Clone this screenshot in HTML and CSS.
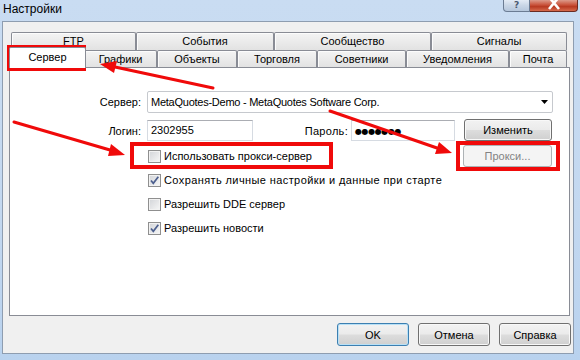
FILE: index.html
```html
<!DOCTYPE html>
<html lang="ru">
<head>
<meta charset="utf-8">
<title>Настройки</title>
<link rel="stylesheet" href="styles.css">
</head>
<body>
<div class="titlebar">
  <span class="title">Настройки</span>
  <div class="caption">
    <div class="cap-help"><span class="q">?</span></div>
    <div class="cap-close">
      <svg width="14" height="10" viewBox="0 0 14 10"><path d="M2 -3 L12 9 M12 -3 L2 9" stroke="#fff" stroke-width="2.6" fill="none"/></svg>
    </div>
  </div>
</div>
<div class="client">
  <div class="tabs">
    <div class="tabrow row-top">
      <div class="tab w-ftp">FTP</div>
      <div class="tab w-events">События</div>
      <div class="tab w-comm">Сообщество</div>
      <div class="tab w-sig">Сигналы</div>
    </div>
    <div class="tabrow row-bottom">
      <div class="tab tab-selected">Сервер</div>
      <div class="tab w-charts">Графики</div>
      <div class="tab w-obj">Объекты</div>
      <div class="tab w-trade">Торговля</div>
      <div class="tab w-adv">Советники</div>
      <div class="tab w-notif">Уведомления</div>
      <div class="tab w-mail">Почта</div>
    </div>
  </div>
  <div class="panel">
    <div class="f-row row-server">
      <label class="lbl">Сервер:</label>
      <div class="combo">
        <span class="combo-text">MetaQuotes-Demo - MetaQuotes Software Corp.</span>
        <svg class="combo-arrow" width="7" height="4" viewBox="0 0 7 4"><path d="M0 0 H7 L3.5 4 Z" fill="#000"/></svg>
      </div>
    </div>
    <div class="f-row row-login">
      <label class="lbl">Логин:</label>
      <div class="edit edit-login">2302955</div>
      <label class="lbl2">Пароль:</label>
      <div class="edit edit-pass"><span class="dots">●●●●●●●</span></div>
      <button class="btn btn-change">Изменить</button>
    </div>
    <div class="checks">
      <div class="chk-row">
        <span class="chk"></span><span class="chk-label">Использовать прокси-сервер</span>
        <button class="btn btn-disabled btn-proxy">Прокси...</button>
      </div>
      <div class="chk-row">
        <span class="chk checked"><svg width="11" height="11" viewBox="0 0 11 11"><path d="M2 5.5 L4.3 8.3 L9.3 1.8" stroke="#4c5f8e" stroke-width="1.7" fill="none"/></svg></span><span class="chk-label chk-label-wide">Сохранять личные настройки и данные при старте</span>
      </div>
      <div class="chk-row">
        <span class="chk"></span><span class="chk-label">Разрешить DDE сервер</span>
      </div>
      <div class="chk-row">
        <span class="chk checked"><svg width="11" height="11" viewBox="0 0 11 11"><path d="M2 5.5 L4.3 8.3 L9.3 1.8" stroke="#4c5f8e" stroke-width="1.7" fill="none"/></svg></span><span class="chk-label">Разрешить новости</span>
      </div>
    </div>
  </div>
  <div class="dlg-btns">
    <button class="btn btn-default">OK</button>
    <button class="btn">Отмена</button>
    <button class="btn">Справка</button>
  </div>
</div>
<svg class="annot" width="580" height="360" viewBox="0 0 580 360">
  <g fill="none" stroke="#f00a0a" stroke-width="4">
    <rect x="9" y="47" width="75" height="22"/>
    <rect x="132" y="144" width="199" height="23"/>
    <rect x="458" y="143" width="100" height="26"/>
  </g>
  <g stroke="#f00a0a" stroke-width="3" stroke-linecap="round">
    <line x1="213" y1="88" x2="115" y2="67"/>
    <line x1="14" y1="122" x2="110" y2="150"/>
    <line x1="330" y1="111" x2="437" y2="148"/>
  </g>
  <g fill="#f00a0a">
    <polygon points="100,64 117,61 114,73"/>
    <polygon points="125,155 108,156 111,144"/>
    <polygon points="452,153 435,154 439,142"/>
  </g>
</svg>
</body>
</html>
```
FILE: styles.css
```css
* { box-sizing: border-box; }

html, body { margin: 0; padding: 0; }

body {
  width: 580px;
  height: 360px;
  overflow: hidden;
  position: relative;
  background: linear-gradient(#c9dcf2, #c3d8f0 60%, #b9d2ee);
  font-family: "Liberation Sans", Arial, sans-serif;
  font-size: 11px;
  color: #000;
}

.titlebar {
  height: 21px;
  display: flex;
  align-items: flex-start;
  padding: 0 2px 0 3px;
}

.title {
  font-size: 12px;
  line-height: 17px;
  margin-top: 1px;
  color: #000;
}

.caption {
  margin-left: auto;
  display: flex;
}

.cap-help {
  width: 27px;
  height: 12px;
  border: 1px solid #6b7c93;
  border-top: none;
  border-radius: 0 0 0 4px;
  background: linear-gradient(#e3ebf5, #c9d6e6 50%, #b6c7dc);
  display: flex;
  justify-content: center;
  align-items: flex-start;
  overflow: hidden;
}

.cap-help .q {
  font-family: "DejaVu Sans", sans-serif;
  font-weight: bold;
  font-size: 9px;
  line-height: 11px;
  color: #4b5a70;
}

.cap-close {
  width: 48px;
  height: 12px;
  border: 1px solid #6a2b22;
  border-top: none;
  border-left: none;
  border-radius: 0 0 4px 0;
  background: linear-gradient(#dc9a8a, #c9523a 45%, #b83a22 60%, #d66a4c);
  display: flex;
  justify-content: center;
  overflow: hidden;
}

.client {
  margin-left: 2px;
  width: 572px;
  height: 333px;
  border: 1px solid #8e9db0;
  background: #f0f0f0;
  padding: 10px 0 0 6px;
}

.tabs {
  margin-left: 2px;
  width: 556px;
}

.tabrow {
  display: flex;
}

.row-top { height: 18px; }
.row-bottom { height: 17px; }

.tab {
  border: 1px solid #898c95;
  border-bottom: none;
  border-radius: 2px 2px 0 0;
  background: linear-gradient(#f4f4f4, #ebebeb 50%, #e2e2e2);
  text-align: center;
  white-space: nowrap;
  box-shadow: inset 1px 1px 0 #fcfcfc;
}

.row-top .tab { line-height: 17px; }
.row-bottom .tab { line-height: 16px; }

.w-ftp { width: 125px; }
.w-events { width: 138px; }
.w-comm { width: 157px; }
.w-sig { width: 136px; }

.w-charts { width: 73px; }
.w-obj { width: 80px; }
.w-trade { width: 80px; }
.w-adv { width: 89px; }
.w-notif { width: 103px; }
.w-mail { width: 58px; }

.row-bottom .tab-selected {
  width: 77px;
  height: 21px;
  margin: -3px -2px 0 -2px;
  background: #fff;
  box-shadow: none;
  position: relative;
  z-index: 1;
  line-height: 18px;
}

.panel {
  width: 561px;
  height: 249px;
  border: 1px solid #898c95;
  background: #fff;
  padding-top: 23px;
}

.f-row {
  display: flex;
}

.row-server {
  height: 22px;
  align-items: center;
}

.lbl {
  width: 131px;
  text-align: right;
  margin-right: 6px;
}

.combo {
  width: 406px;
  height: 22px;
  border: 1px solid #c6c9ce;
  border-radius: 2px;
  display: flex;
  align-items: center;
  padding: 0 3px 0 3px;
}

.combo-text { flex: 1; letter-spacing: -0.25px; }

.combo-arrow { margin-right: 1px; }

.row-login {
  margin-top: 6px;
  height: 22px;
  align-items: flex-end;
}

.row-login .lbl { align-self: center; margin-top: 1px; }

.edit {
  height: 21px;
  border: 1px solid #d6dbe2;
  border-top-color: #abadb3;
  padding: 0 3px;
  line-height: 19px;
  background: #fff;
}

.edit-login { width: 106px; }

.lbl2 {
  width: 95px;
  text-align: right;
  margin-right: 3px;
  align-self: center;
  margin-top: 1px;
  letter-spacing: 0.3px;
}

.edit-pass { width: 104px; }

.dots {
  font-family: "DejaVu Sans", sans-serif;
  font-size: 8px;
  letter-spacing: -0.4px;
  line-height: 19px;
}

.btn {
  font-family: "Liberation Sans", Arial, sans-serif;
  font-size: 11px;
  color: #000;
  height: 22px;
  border: 1px solid #707070;
  border-radius: 3px;
  background: linear-gradient(#f2f2f2, #ebebeb 48%, #dddddd 52%, #cfcfcf);
  box-shadow: inset 0 0 0 1px #f8f8f8;
  padding: 0;
}

.btn-change {
  width: 88px;
  margin-left: 9px;
}

.checks {
  margin-top: 3px;
  margin-left: 138px;
  width: 404px;
}

.chk-row {
  height: 24px;
  display: flex;
  align-items: center;
}

.chk {
  width: 13px;
  height: 13px;
  border: 1px solid #8f8f8f;
  background: linear-gradient(135deg, #d2d4d8, #f7f7f7);
  box-shadow: inset 0 0 0 1px #f2f2f2;
  display: flex;
  align-items: center;
  justify-content: center;
  flex: none;
}

.chk-label {
  margin-left: 3px;
  white-space: nowrap;
}

.chk-label-wide { letter-spacing: 0.4px; }

.btn-proxy {
  margin-left: auto;
  width: 89px;
}

.btn-disabled {
  border-color: #adb2b5;
  background: #f4f4f4;
  box-shadow: none;
  color: #838383;
}

.dlg-btns {
  display: flex;
  gap: 9px;
  margin-top: 7px;
  margin-left: 328px;
}

.dlg-btns .btn {
  width: 72px;
  height: 23px;
}

.btn-default {
  border-color: #3c7fb1;
  box-shadow: inset 0 0 0 1px #b8e0f6;
}

.annot {
  position: absolute;
  left: 0;
  top: 0;
  pointer-events: none;
}
```
